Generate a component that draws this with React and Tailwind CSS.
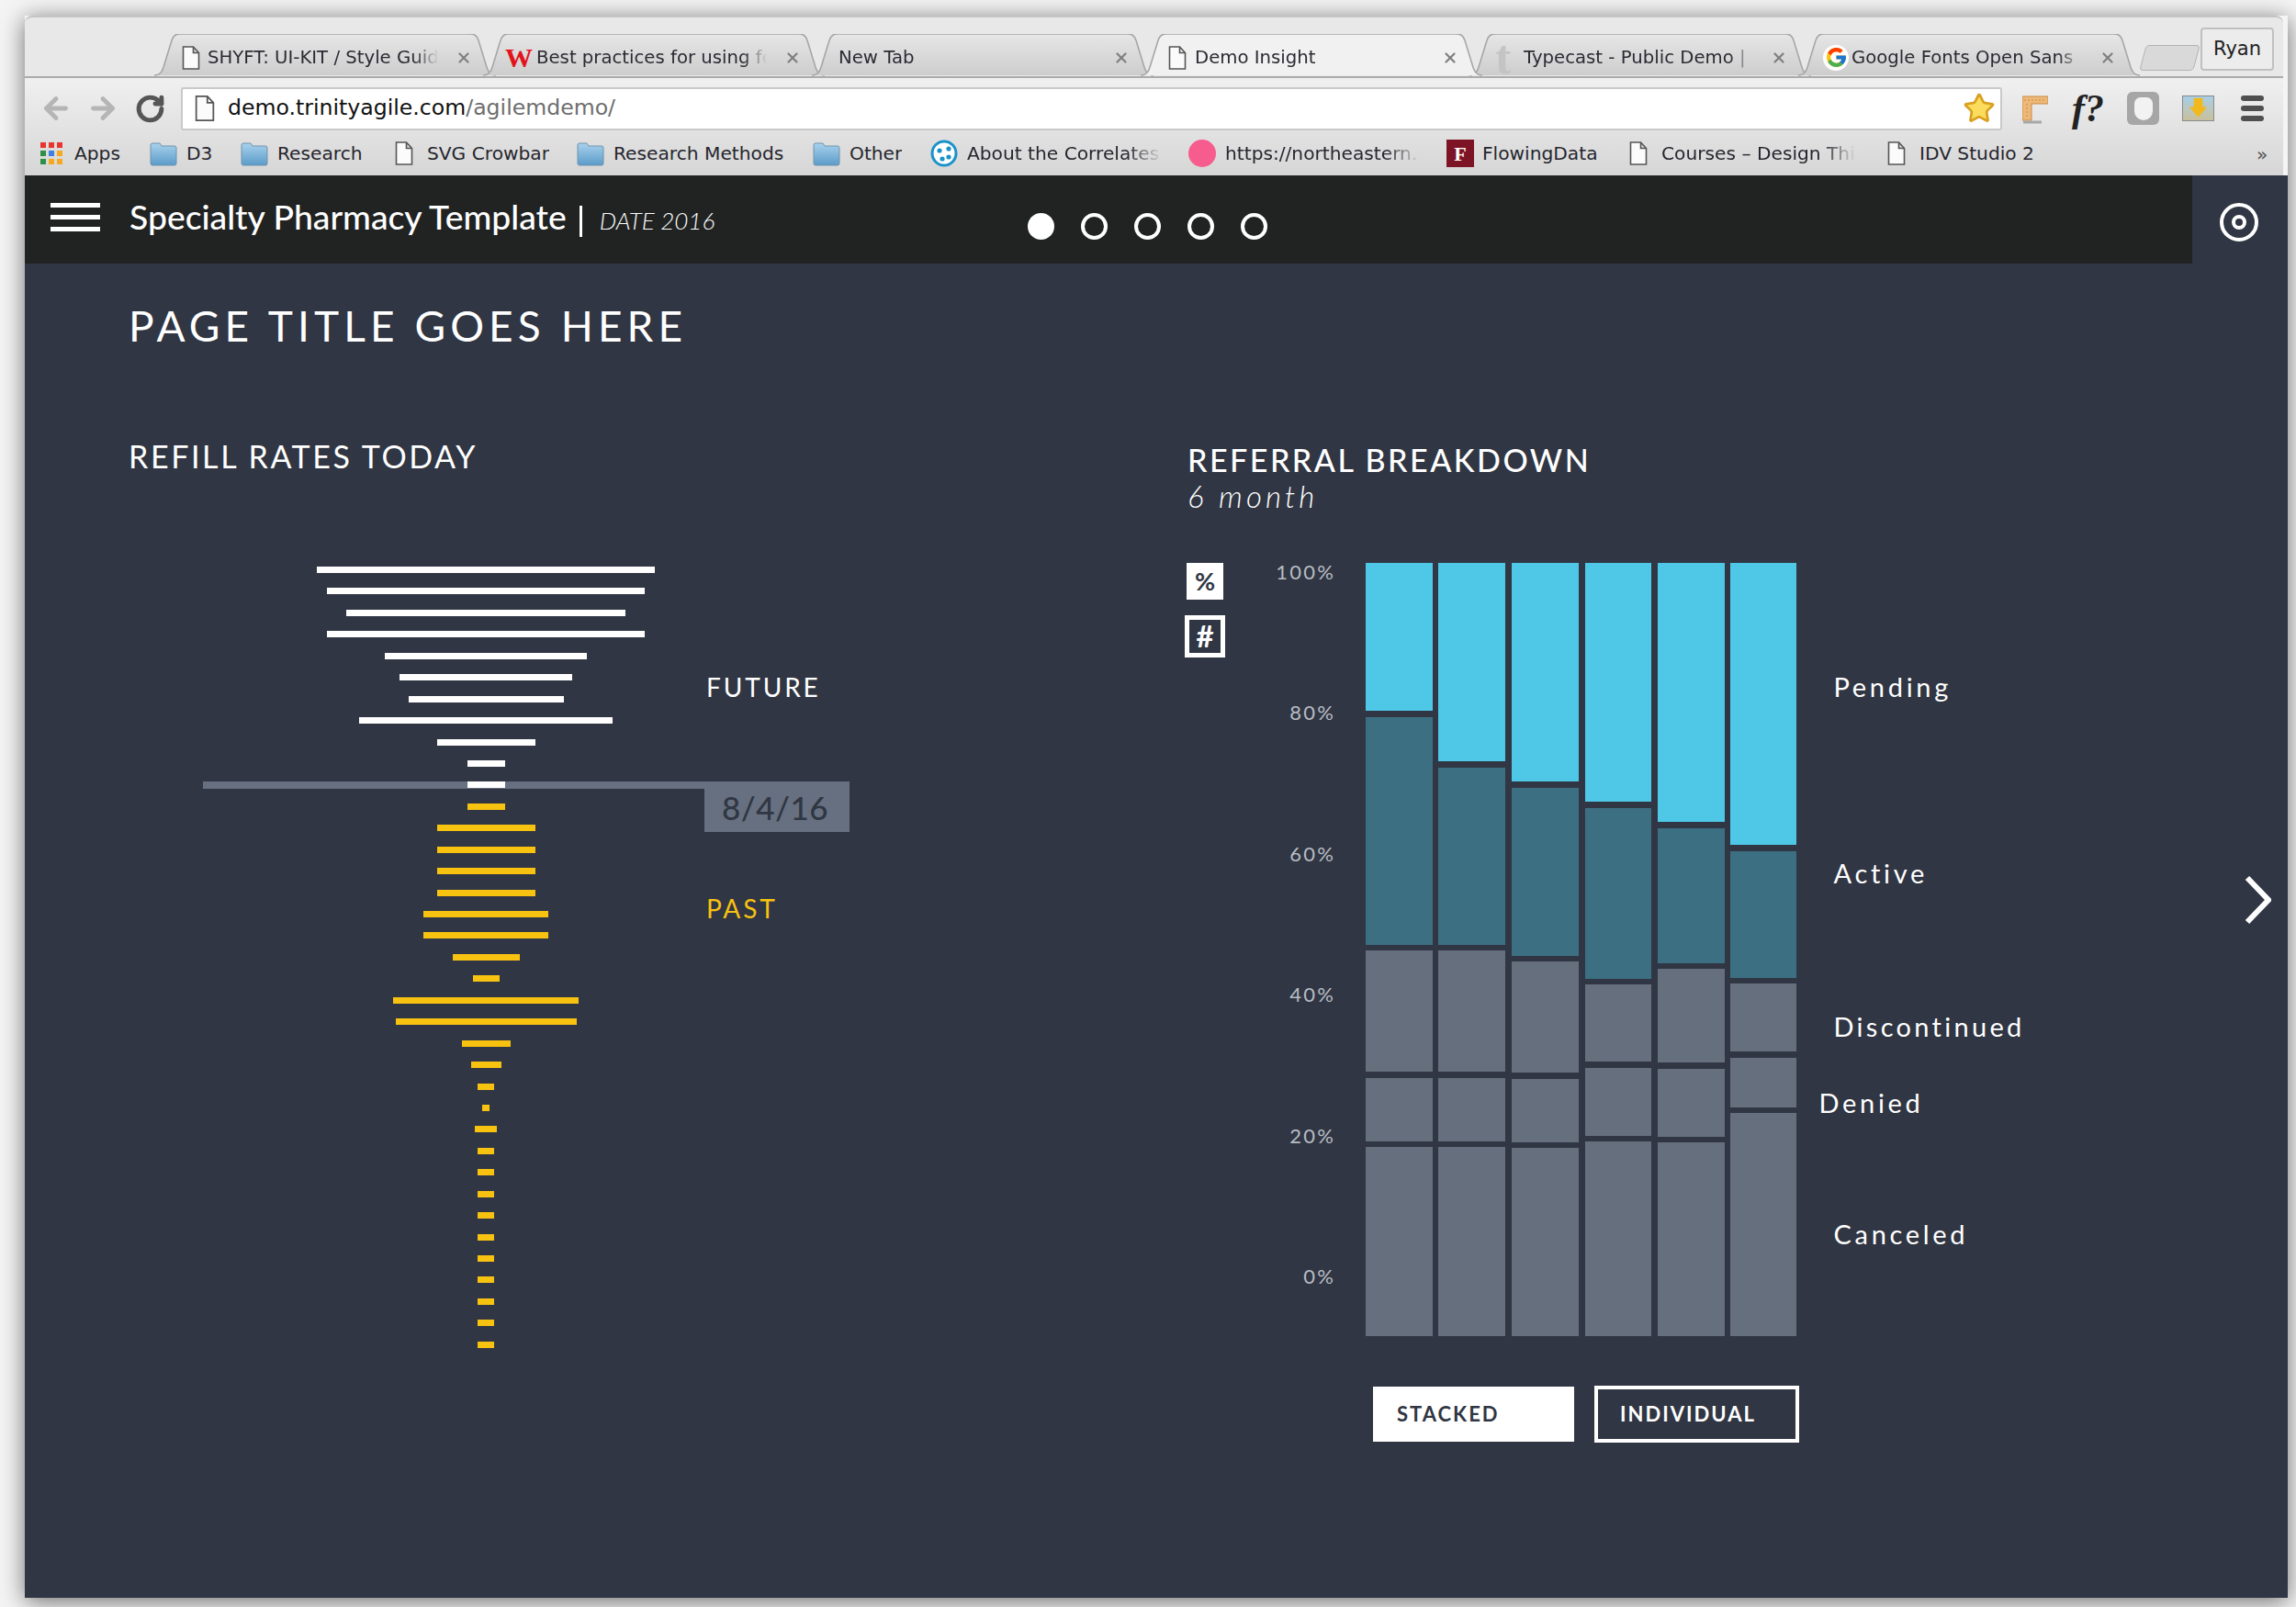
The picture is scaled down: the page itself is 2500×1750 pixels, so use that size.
import React from 'react';
import { ArrowLeft, ArrowRight, RotateCw, Star, X } from 'lucide-react';
import { FcGoogle } from 'react-icons/fc';

const Doc = ({ className = 'w-[20px] h-[26px]' }) => (
  <svg viewBox="0 0 20 26" className={`${className} shrink-0`}>
    <path d="M1.5 1h11l6 6.5V25h-17z M12.5 1v6.5h6" fill="#fbfbfb" stroke="#555" strokeWidth="1.6" />
  </svg>
);

const Folder = () => (
  <svg viewBox="0 0 30 27" className="w-[30px] h-[27px] shrink-0">
    <defs>
      <linearGradient id="fold" x1="0" y1="0" x2="0" y2="1">
        <stop offset="0" stopColor="#a9d2ec" />
        <stop offset="1" stopColor="#5b9bc9" />
      </linearGradient>
    </defs>
    <path d="M1 4q0-2 2-2h8l2 3h14q2 0 2 2v17q0 2-2 2H3q-2 0-2-2z" fill="url(#fold)" stroke="#6f93ad" strokeWidth="1" />
  </svg>
);

const AppsIcon = () => (
  <div className="grid grid-cols-3 gap-[3px] w-[24px] shrink-0">
    {['#e8352e', '#e8352e', '#e8352e', '#2f8f46', '#3f7fe0', '#f6a821', '#2f8f46', '#f6a821', '#f6a821'].map((c, i) => (
      <span key={i} className="h-[6px] w-[6px]" style={{ backgroundColor: c }} />
    ))}
  </div>
);

const CorrelatesIcon = () => (
  <svg viewBox="0 0 30 30" className="w-[30px] h-[30px] shrink-0">
    <circle cx="15" cy="15" r="13" fill="#fff" stroke="#1b93c9" strokeWidth="3" />
    <circle cx="10" cy="12" r="2.6" fill="#1b93c9" />
    <circle cx="20" cy="10" r="2.6" fill="#1b93c9" />
    <circle cx="20" cy="19" r="2.6" fill="#1b93c9" />
    <circle cx="13" cy="21" r="2.6" fill="#1b93c9" />
  </svg>
);

const tabs = [
  { label: 'SHYFT: UI-KIT / Style Guide', icon: <Doc />, iconWidth: 'w-[58px] pl-[30px]' },
  { label: 'Best practices for using font', icon: <span className="font-['Liberation_Serif'] font-bold text-[30px] leading-none text-[#e3131b]">W</span>, iconWidth: 'w-[58px] pl-[24px]' },
  { label: 'New Tab', icon: null, iconWidth: 'w-[29px]' },
  { label: 'Demo Insight', icon: <Doc />, iconWidth: 'w-[59px] pl-[30px]', active: true },
  { label: 'Typecast - Public Demo | Design', icon: <span className="font-['Liberation_Serif'] font-bold text-[52px] leading-[30px] text-[#c4c4c4]">t</span>, iconWidth: 'w-[59px] pl-[28px]' },
  {
    label: 'Google Fonts Open Sans',
    icon: (
      <span className="flex h-[28px] w-[28px] items-center justify-center rounded-full bg-white">
        <FcGoogle className="h-[25px] w-[25px]" />
      </span>
    ),
    iconWidth: 'w-[58px] pl-[27px]',
  },
];

const TAB_PATH = 'M0 45C7 45 9 40 11 33L19 7C21 1 24 0 29 0H343C348 0 351 1 353 7L361 33C363 40 365 45 372 45';

const Tab = ({ tab, first }) => (
  <div className={`relative h-[46px] w-[372px] shrink-0 ${first ? '' : '-ml-[14px]'} ${tab.active ? 'z-10' : ''}`}>
    <svg viewBox="0 0 372 46" className="absolute inset-0 h-[46px] w-[372px]">
      <defs>
        <linearGradient id="tabfill" x1="0" y1="0" x2="0" y2="1">
          <stop offset="0" stopColor="#e6e6e6" />
          <stop offset="1" stopColor="#cdcdcd" />
        </linearGradient>
      </defs>
      <path d={TAB_PATH} fill={tab.active ? '#f1f1f1' : 'url(#tabfill)'} stroke="#a6a6a6" strokeWidth="1.6" />
    </svg>
    <div className="relative flex h-full items-center pt-[5px] font-['DejaVu_Sans',sans-serif] text-[19.7px] text-[#2b2b33]">
      <div className={`flex shrink-0 items-center ${tab.iconWidth}`}>{tab.icon}</div>
      <span className="min-w-0 flex-1 overflow-hidden whitespace-nowrap [mask-image:linear-gradient(to_right,black_88%,transparent_98%)]">
        {tab.label}
      </span>
      <X className="ml-[14px] mr-[26px] h-[18px] w-[18px] shrink-0 text-[#808080]" strokeWidth={3} />
    </div>
  </div>
);

const bookmarks = [
  { label: 'Apps', icon: <AppsIcon />, width: 'w-[119px]', gap: 'gap-[13px]' },
  { label: 'D3', icon: <Folder />, width: 'w-[99px]', gap: 'gap-[10px]' },
  { label: 'Research', icon: <Folder />, width: 'w-[168px]', gap: 'gap-[10px]' },
  { label: 'SVG Crowbar', icon: <Doc />, width: 'w-[198px]', gap: 'gap-[15px]' },
  { label: 'Research Methods', icon: <Folder />, width: 'w-[257px]', gap: 'gap-[10px]' },
  { label: 'Other', icon: <Folder />, width: 'w-[128px]', gap: 'gap-[10px]' },
  { label: 'About the Correlates', icon: <CorrelatesIcon />, width: 'w-[281px]', gap: 'gap-[10px]', fade: true },
  { label: 'https://northeastern.', icon: <span className="h-[30px] w-[30px] shrink-0 rounded-full bg-[#f65c8e]" />, width: 'w-[281px]', gap: 'gap-[10px]', fade: true },
  {
    label: 'FlowingData',
    icon: <span className="flex h-[30px] w-[30px] shrink-0 items-center justify-center bg-[#7d1425] font-['Liberation_Serif'] text-[22px] font-bold text-white">F</span>,
    width: 'w-[199px]',
    gap: 'gap-[9px]',
  },
  { label: 'Courses – Design Thinking', icon: <Doc />, width: 'w-[281px]', gap: 'gap-[15px]', fade: true },
  { label: 'IDV Studio 2', icon: <Doc />, width: 'w-[402px]', gap: 'gap-[15px]' },
];

// Funnel chart rows, newest at the top. Widths in px.
const futureBars = [368, 346, 304, 346, 220, 188, 169, 276, 107, 41, 41];
const pastBars = [41, 107, 107, 107, 107, 136, 136, 73, 29, 202, 197, 53, 33, 18, 8, 24, 18, 18, 18, 18, 18, 18, 18, 18, 18, 18];

const CYAN = 'bg-[#4fc8e8]';
const TEAL = 'bg-[#3c6f82]';
const GREY = 'bg-[#666f7e]';

// Each segment: [height, colour]. Gaps between segments are the gap of that column.
const columns = [
  { width: 'w-[72.5px]', segs: [[161, 0], [248, 1], [132, 2], [69, 2], [206, 2]] },
  { width: 'w-[72.5px]', segs: [[216, 0], [193, 1], [132, 2], [69, 2], [206, 2]] },
  { width: 'w-[73px]', segs: [[238, 0], [183, 1], [121, 2], [69, 2], [205, 2]] },
  { width: 'w-[72.5px]', segs: [[260, 0], [186, 1], [84, 2], [74, 2], [212, 2]] },
  { width: 'w-[72.5px]', segs: [[282, 0], [147, 1], [102, 2], [74, 2], [211, 2]] },
  { width: 'w-[72px]', segs: [[307, 0], [138, 1], [74, 2], [54, 2], [243, 2]] },
];

const segColors = [CYAN, TEAL, GREY];

const axisLabels = ['100%', '80%', '60%', '40%', '20%', '0%'];

const Avenir = "font-['Lato',sans-serif]";

const App = () => {
  return (
    <div className="h-[1750px] w-[2500px] overflow-hidden bg-[#f4f4f4] pl-[27px] pt-[17px]">
      <div className="relative h-[1723px] w-[2464px] shadow-[0_4px_24px_rgba(0,0,0,0.55)]">
        {/* Browser chrome */}
        <div className="h-[174px] w-[2459px] overflow-hidden rounded-t-[8px] border-t-2 border-[#c4c4c4] bg-[#e8e8e8]">
          <div className="relative flex h-[64px] items-end pl-[141px]">
            {tabs.map((tab, i) => (
              <Tab key={tab.label} tab={tab} first={i === 0} />
            ))}
            <div className="mb-[6px] ml-[3px] h-[28px] w-[59px] -skew-x-[15deg] rounded-[4px] border border-[#b3b3b3] bg-[#d9d9d9]" />
            <div className="mb-[6px] ml-[4px] flex h-[47px] w-[80px] items-center justify-center rounded-[4px] border-2 border-[#c0c0c0] bg-[#ececec] font-['DejaVu_Sans',sans-serif] text-[21px] text-[#222]">
              Ryan
            </div>
          </div>
          <div className="h-[108px] border-t-2 border-[#ababab] bg-gradient-to-b from-[#f0f0f0] to-[#d6d6d6]">
            <div className="flex h-[57px] items-center pt-[9px]">
              <ArrowLeft className="ml-[16px] h-[36px] w-[36px] text-[#b5b5b5]" strokeWidth={3.2} />
              <ArrowRight className="ml-[15px] h-[36px] w-[36px] text-[#b5b5b5]" strokeWidth={3.2} />
              <RotateCw className="ml-[17px] h-[33px] w-[33px] text-[#555]" strokeWidth={3.6} />
              <div className="ml-[17px] flex h-[47px] w-[1983px] items-center rounded-[3px] border-2 border-[#c9c9c9] bg-white pl-[13px] font-['DejaVu_Sans',sans-serif] text-[23.6px]">
                <Doc className="h-[30px] w-[22px]" />
                <span className="ml-[14px] text-[#111]">demo.trinityagile.com</span>
                <span className="text-[#6e6e6e]">/agilemdemo/</span>
                <Star className="ml-auto mr-[5px] h-[36px] w-[36px] text-[#d9a020]" fill="#fbdc5c" strokeWidth={1.8} />
              </div>
              <svg viewBox="0 0 28 34" className="ml-[22px] h-[34px] w-[28px]">
                <path d="M0 4h28v8H10v18H0z" fill="#eeb878" stroke="#c98a45" strokeWidth="1" />
                <path d="M2 8h24M5 12v16" stroke="#c98a45" strokeWidth="1" strokeDasharray="2 2" />
                <path d="M1 32h20" stroke="#a8a8a8" strokeWidth="3" />
              </svg>
              <span className="ml-[26px] w-[38px] whitespace-nowrap font-['Liberation_Serif',serif] text-[42px] font-bold italic leading-none text-[#222]">f?</span>
              <div className="ml-[22px] flex h-[36px] w-[35px] items-center justify-center rounded-[6px] bg-[#a6a6a6]">
                <span className="h-[25px] w-[20px] rounded-b-[12px] rounded-t-[8px] bg-[#f2f2f2]" />
              </div>
              <div className="relative ml-[25px] h-[28px] w-[35px] border border-[#8a8a8a] bg-gradient-to-b from-[#a6cfe6] to-[#c9bf9b]">
                <svg viewBox="0 0 20 16" className="absolute inset-0 h-full w-full">
                  <path d="M7 1h6v6h3l-6 7-6-7h3z" fill="#f2b91d" />
                </svg>
              </div>
              <div className="ml-[29px] flex w-[25px] flex-col gap-[5px]">
                <span className="h-[6px] rounded-full bg-[#4f4f4f]" />
                <span className="h-[6px] rounded-full bg-[#4f4f4f]" />
                <span className="h-[6px] rounded-full bg-[#4f4f4f]" />
              </div>
            </div>
            <div className="flex h-[51px] items-center pl-[17px] font-['DejaVu_Sans',sans-serif] text-[20.2px] text-[#26262e]">
              {bookmarks.map(b => (
                <div key={b.label} className={`flex shrink-0 items-center ${b.gap} ${b.width}`}>
                  {b.icon}
                  <span
                    className={`overflow-hidden whitespace-nowrap ${
                      b.fade ? 'w-[212px] [mask-image:linear-gradient(to_right,black_82%,transparent_100%)]' : ''
                    }`}
                  >
                    {b.label}
                  </span>
                </div>
              ))}
              <span className="text-[20px] text-[#555]">»</span>
            </div>
          </div>
        </div>

        {/* App */}
        <div className={`relative h-[1549px] w-[2464px] bg-[#303643] text-white ${Avenir}`}>
          <nav className="flex h-[96px] w-[2360px] items-center bg-[#212323] pl-[28px]">
            <div className="mb-[6px] flex w-[54px] flex-col gap-[8px]">
              <span className="h-[5px] bg-white" />
              <span className="h-[5px] bg-white" />
              <span className="h-[5px] bg-white" />
            </div>
            <span className="mb-[6px] ml-[32px] text-[37.3px] font-medium leading-none">Specialty Pharmacy Template</span>
            <span className="ml-[14px] mt-[4px] h-[34px] w-[3px] bg-white" />
            <span className="ml-[19px] mt-[2px] text-[26px] font-light italic">DATE 2016</span>
            <div className="ml-[341px] mt-[15px] flex gap-[29px]">
              <span className="h-[29px] w-[29px] rounded-full bg-white" />
              <span className="h-[29px] w-[29px] rounded-full border-[4px] border-white" />
              <span className="h-[29px] w-[29px] rounded-full border-[4px] border-white" />
              <span className="h-[29px] w-[29px] rounded-full border-[4px] border-white" />
              <span className="h-[29px] w-[29px] rounded-full border-[4px] border-white" />
            </div>
          </nav>

          {/* Settings target, sits on the page colour right of the nav */}
          <svg viewBox="0 0 42 42" className="absolute left-[2390px] top-[30px] h-[42px] w-[42px]">
            <circle cx="21" cy="21" r="19" fill="none" stroke="#fff" strokeWidth="4" />
            <circle cx="21" cy="21" r="6" fill="none" stroke="#fff" strokeWidth="4" />
          </svg>

          <svg viewBox="0 0 29 54" className="absolute left-[2417px] top-[762px] h-[54px] w-[29px]">
            <path d="M3 3l23 24L3 51" fill="none" stroke="#fff" strokeWidth="6" />
          </svg>

          <div className="pl-[113px]">
            <h1 className="mt-[40px] h-[56px] text-[46px] font-normal leading-[56px] tracking-[5.1px]">PAGE TITLE GOES HERE</h1>

            <div className="flex">
              {/* Refill rates */}
              <section className="w-[1153px]">
                <h2 className="mt-[94px] h-[40px] text-[34px] leading-[40px] tracking-[2.6px]">REFILL RATES TODAY</h2>
                <div className="relative mt-[100px] flex">
                  <div className="absolute left-[81px] top-[234px] h-[8px] w-[704px] bg-[#667080]" />
                  <div className="relative ml-[205px] flex w-[368px] flex-col items-center gap-[16.45px]">
                    {futureBars.map((w, i) => (
                      <span key={i} className="h-[7px] bg-white" style={{ width: w }} />
                    ))}
                    {pastBars.map((w, i) => (
                      <span key={i} className="h-[7px] bg-[#f8c211]" style={{ width: w }} />
                    ))}
                  </div>
                  <div className="ml-[54px] flex flex-col">
                    <span className="ml-[2px] mt-[111px] h-[40px] text-[28px] leading-[40px] tracking-[2.9px]">FUTURE</span>
                    <div className="mt-[83px] flex h-[55px] w-[158px] items-center justify-center bg-[#667080] pr-[4px] pt-[2px] text-[35px] font-medium tracking-[0.5px] text-[#303643]">
                      8/4/16
                    </div>
                    <span className="ml-[2px] mt-[63px] h-[40px] text-[28px] leading-[40px] tracking-[2.9px] text-[#f8c211]">PAST</span>
                  </div>
                </div>
              </section>

              {/* Referral breakdown */}
              <section>
                <h2 className="mt-[98px] h-[40px] text-[34px] font-medium leading-[40px] tracking-[2.5px]">REFERRAL BREAKDOWN</h2>
                <p className="mt-[1px] h-[36px] text-[33px] font-light italic leading-[36px] tracking-[4.1px]">6 month</p>

                <div className="mt-[55px] flex items-start">
                  <div className="-ml-[3px] flex w-[44px] flex-col items-center">
                    <div className="flex h-[40px] w-[40px] items-center justify-center bg-white text-[27px] font-bold text-[#303643]">%</div>
                    <div className="mt-[17px] flex h-[46px] w-[44px] items-center justify-center border-[5px] border-white text-[33px] font-bold">#</div>
                  </div>
                  <div className="-mt-[2px] ml-[9px] flex w-[111px] flex-col gap-[129.4px] text-right text-[22px] leading-[24px] tracking-[2.2px] text-[#b8bcc4]">
                    {axisLabels.map(l => (
                      <span key={l} className="h-[24px]">{l}</span>
                    ))}
                  </div>
                  <div className="ml-[33px] flex gap-[6.9px]">
                    {columns.map((col, i) => (
                      <div key={i} className={`flex flex-col gap-[6.5px] ${col.width}`}>
                        {col.segs.map(([h, c], j) => (
                          <div key={j} className={segColors[c]} style={{ height: h }} />
                        ))}
                      </div>
                    ))}
                  </div>
                  <div className="ml-[40px] flex flex-col text-[29px] leading-[36px] tracking-[3.7px]">
                    <span className="mt-[117px] h-[36px]">Pending</span>
                    <span className="mt-[167px] h-[36px]">Active</span>
                    <span className="mt-[131px] h-[36px] whitespace-nowrap tracking-[3.3px]">Discontinued</span>
                    <span className="-ml-[16px] mt-[47px] h-[36px]">Denied</span>
                    <span className="mt-[107px] h-[36px]">Canceled</span>
                  </div>
                </div>

                <div className="ml-[202px] mt-[54px] flex items-center gap-[22px] text-[22px] font-bold tracking-[2px]">
                  <div className="flex h-[60px] w-[219px] items-center bg-white pb-[2px] pl-[26px] text-[#303643]">STACKED</div>
                  <div className="flex h-[62px] w-[223px] items-center border-[4px] border-white pb-[2px] pl-[24px]">INDIVIDUAL</div>
                </div>
              </section>
            </div>
          </div>
        </div>
      </div>
    </div>
  );
};

export default App;
